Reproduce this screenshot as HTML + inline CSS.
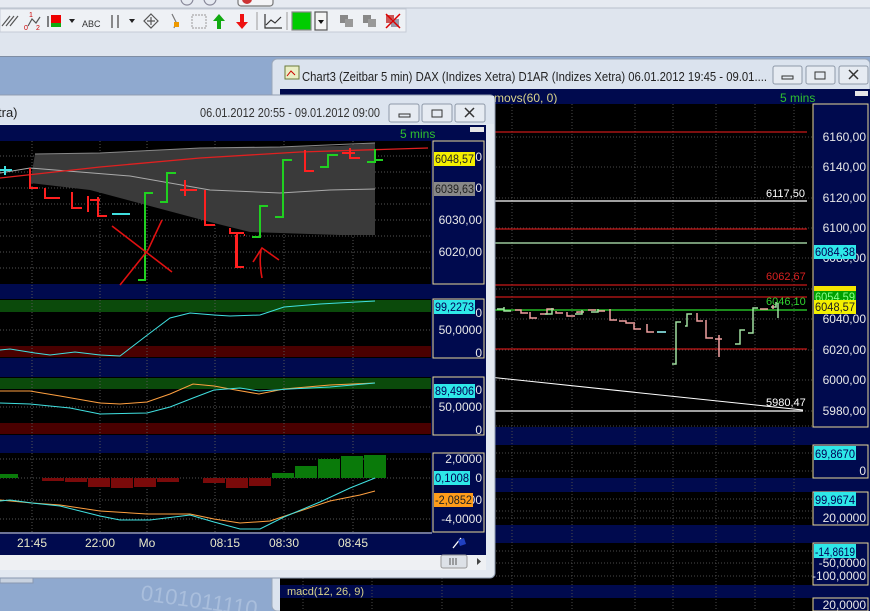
<!DOCTYPE html>
<html><head><meta charset="utf-8">
<style>
html,body{margin:0;padding:0;width:870px;height:611px;overflow:hidden;background:#8fa9cf}
svg{display:block}
text{font-family:"Liberation Sans",sans-serif}
</style></head>
<body>
<svg width="870" height="611" viewBox="0 0 870 611" xmlns="http://www.w3.org/2000/svg">
<rect x="0" y="0" width="870" height="611" fill="#8fa9cf"/>
<text x="140" y="600" font-size="22" fill="#a9bedc" transform="rotate(8 140 600)">0101011110</text>
<rect x="0" y="0" width="870" height="57" fill="#dfe5ee"/>
<rect x="0" y="0" width="870" height="8" fill="#e6eaf1"/>
<line x1="0" y1="8" x2="870" y2="8" stroke="#b8c0cc"/>
<rect x="0" y="9" width="406" height="23" fill="#eef1f5" stroke="#c6ccd6"/>
<line x1="0" y1="56.5" x2="870" y2="56.5" stroke="#7f8da3"/>
<g stroke-width="1.2" fill="none">
<path d="M2 26 L10 16 M6 26 L14 16 M10 26 L18 16" stroke="#555"/>
<path d="M28 26 L32 19 L36 23 L40 17" stroke="#555"/>
<text x="29" y="17" font-size="7" fill="#c00" stroke="none">1</text>
<text x="24" y="30" font-size="7" fill="#c00" stroke="none">0</text><text x="36" y="30" font-size="7" fill="#c00" stroke="none">2</text>
<rect x="51" y="15" width="10" height="8" fill="#e00" stroke="none"/><rect x="51" y="23" width="10" height="4" fill="#1a1" stroke="none"/>
<path d="M48 16 V27" stroke="#333"/>
<path d="M69 19 L75 19 L72 23 Z" fill="#222" stroke="none"/>
<text x="82" y="27" font-size="9" fill="#333" stroke="none">ABC</text>
<path d="M112 15 V28 M118 15 V28" stroke="#444"/>
<path d="M129 19 L135 19 L132 23 Z" fill="#222" stroke="none"/>
<path d="M151 14 L158 21 L151 28 L144 21 Z M151 17 V25 M147 21 H155" stroke="#555"/>
<path d="M172 14 L176 22 L174 28" stroke="#777"/><rect x="174" y="22" width="5" height="5" fill="#e90" stroke="none"/>
<rect x="192" y="15" width="14" height="13" stroke="#aaa" stroke-dasharray="2 1"/>
<path d="M219 14 L225 21 H221 V29 H217 V21 H213 Z" fill="#1a1" stroke="none"/>
<path d="M242 29 L248 22 H244 V14 H240 V22 H236 Z" fill="#e11" stroke="none"/>
<line x1="257" y1="12" x2="257" y2="30" stroke="#aaa"/>
<path d="M265 14 V28 H282 M266 25 L271 20 L275 23 L281 17" stroke="#333"/>
<line x1="287" y1="12" x2="287" y2="30" stroke="#aaa"/>
<rect x="292" y="12" width="19" height="18" fill="#0c0" stroke="#888"/>
<rect x="315" y="12" width="12" height="18" fill="#f4f4f4" stroke="#555"/>
<path d="M318 20 L324 20 L321 24 Z" fill="#111" stroke="none"/>
<rect x="340" y="15" width="8" height="8" fill="#888" stroke="none"/><rect x="345" y="19" width="8" height="8" fill="#999" stroke="none"/>
<rect x="363" y="15" width="8" height="8" fill="#888" stroke="none"/><rect x="368" y="19" width="8" height="8" fill="#999" stroke="none"/>
<rect x="386" y="15" width="8" height="8" fill="#c55" stroke="none"/><rect x="391" y="19" width="8" height="8" fill="#99a" stroke="none"/>
<path d="M386 14 L400 28 M400 14 L386 28" stroke="#d00" stroke-width="1.5"/>
<circle cx="187" cy="-1" r="6" stroke="#889"/><circle cx="210" cy="-1" r="6" stroke="#889"/>
<rect x="238" y="-4" width="35" height="10" rx="3" fill="#f4f4f6" stroke="#777"/>
<circle cx="247" cy="-1" r="5" fill="#c33" stroke="none"/>
</g>

<!-- RIGHT WINDOW -->
<rect x="272" y="59" width="598" height="552" rx="5" fill="#dbe3ee" stroke="#9aa7b9"/>
<rect x="285" y="66" width="14" height="13" fill="#e9eec5" stroke="#6a7a3a"/>
<path d="M287 76 L291 71 L295 75" stroke="#c00" fill="none"/>
<text x="302" y="81" font-size="13" fill="#222" textLength="465" lengthAdjust="spacingAndGlyphs">Chart3 (Zeitbar 5 min)  DAX (Indizes Xetra) D1AR (Indizes Xetra) 06.01.2012 19:45 - 09.01....</text>
<g fill="#e6ebf2" stroke="#8e99a8">
<rect x="773" y="66" width="29" height="18" rx="2"/><rect x="806" y="66" width="29" height="18" rx="2"/><rect x="839" y="66" width="29" height="18" rx="2"/>
</g>
<rect x="782" y="76" width="11" height="3" fill="none" stroke="#333"/>
<rect x="815" y="72" width="10" height="7" fill="none" stroke="#333"/>
<path d="M849 70 L858 79 M858 70 L849 79" stroke="#333" stroke-width="1.5"/>
<rect x="280" y="89" width="590" height="522" fill="#000a4e"/>
<text x="494" y="102" font-size="12" fill="#d9d38a">movs(60, 0)</text>
<text x="780" y="102" font-size="12" fill="#2fc02f">5 mins</text>
<rect x="855" y="91" width="13" height="5" fill="#e6e6e6"/>
<rect x="280" y="104" width="533" height="323" fill="#000"/>
<rect x="280" y="445" width="533" height="33" fill="#000"/>
<rect x="280" y="492" width="533" height="33" fill="#000"/>
<rect x="280" y="543" width="533" height="42" fill="#000"/>
<rect x="280" y="598" width="533" height="13" fill="#000"/>
<g stroke="#4a4a4a" stroke-dasharray="1 2">
<line x1="303" y1="104" x2="303" y2="611"/><line x1="372" y1="104" x2="372" y2="611"/><line x1="442" y1="104" x2="442" y2="611"/>
<line x1="512" y1="104" x2="512" y2="611"/><line x1="572" y1="104" x2="572" y2="611"/><line x1="635" y1="104" x2="635" y2="611"/>
<line x1="673" y1="104" x2="673" y2="611"/><line x1="716" y1="104" x2="716" y2="611"/><line x1="755" y1="104" x2="755" y2="611"/><line x1="794" y1="104" x2="794" y2="611"/>
<line x1="280" y1="137" x2="813" y2="137"/><line x1="280" y1="167" x2="813" y2="167"/><line x1="280" y1="198" x2="813" y2="198"/>
<line x1="280" y1="228" x2="813" y2="228"/><line x1="280" y1="258" x2="813" y2="258"/><line x1="280" y1="289" x2="813" y2="289"/>
<line x1="280" y1="319" x2="813" y2="319"/><line x1="280" y1="350" x2="813" y2="350"/><line x1="280" y1="380" x2="813" y2="380"/>
<line x1="280" y1="411" x2="813" y2="411"/><line x1="280" y1="426" x2="813" y2="426"/>
<line x1="280" y1="453" x2="813" y2="453"/><line x1="280" y1="471" x2="813" y2="471"/>
<line x1="280" y1="499" x2="813" y2="499"/><line x1="280" y1="511" x2="813" y2="511"/><line x1="280" y1="518" x2="813" y2="518"/>
<line x1="280" y1="551" x2="813" y2="551"/><line x1="280" y1="563" x2="813" y2="563"/><line x1="280" y1="576" x2="813" y2="576"/>
</g>
<g stroke-width="1.3">
<line x1="280" y1="132" x2="807" y2="132" stroke="#c81818"/>
<line x1="280" y1="201" x2="807" y2="201" stroke="#fff"/>
<line x1="280" y1="229" x2="807" y2="229" stroke="#c81818"/>
<line x1="280" y1="243" x2="807" y2="243" stroke="#b9f0b9"/>
<line x1="280" y1="285" x2="807" y2="285" stroke="#c81818"/>
<line x1="280" y1="297" x2="807" y2="297" stroke="#c81818"/>
<line x1="280" y1="310" x2="807" y2="310" stroke="#2ee02e"/>
<line x1="280" y1="349" x2="807" y2="349" stroke="#c81818"/>
<line x1="280" y1="411" x2="803" y2="411" stroke="#fff"/>
<line x1="280" y1="355" x2="803" y2="410" stroke="#fff" stroke-width="1"/>
</g>
<text x="766" y="197" font-size="11" fill="#fff">6117,50</text>
<text x="766" y="280" font-size="11" fill="#d82020">6062,67</text>
<text x="766" y="305" font-size="11" fill="#30d030">6046,10</text>
<text x="766" y="406" font-size="11" fill="#fff">5980,47</text>
<g stroke-width="1.5" fill="none">
<path d="M497 309 H504 M504 307 V311 H511" stroke="#9fe09f"/>
<path d="M515 310 H521 V313 H528 M530 312 V318 H537" stroke="#f0a0a0"/>
<path d="M540 314 H547 V309 H554 M556 311 V313 H563 M567 312 V316 H575 M577 313 V312 H584 M588 310 H596 M598 311 H605" stroke="#f0a0a0"/>
<path d="M545 314 H552 V308 M575 314 H582 V310 M591 312 H598 V309" stroke="#9fe09f"/>
<path d="M610 309 V320 H617 M619 321 H626 V323 H633 M634 322 V329 H641 M647 324 V332 H654" stroke="#f0a0a0"/>
<path d="M657 332 H666" stroke="#9ff"/>
<path d="M672 364 H676 V322 H681 M685 326 H687 V314 H692" stroke="#9fe09f"/>
<path d="M697 313 V321 H703 M706 320 V338 H713 M719 335 V357 M715 339 H722" stroke="#f0a0a0"/>
<path d="M735 344 H740 V330 H745 M748 333 H753 V308 H758 M771 307 H776 V302 M778 303 V318" stroke="#9fe09f"/>
<path d="M760 309 H768 M773 305 V309" stroke="#f0a0a0"/>
</g>
<rect x="813" y="104" width="55" height="323" fill="#000a4e" stroke="#e8d898"/>
<rect x="813" y="445" width="55" height="33" fill="#000a4e" stroke="#e8d898"/>
<rect x="813" y="492" width="55" height="33" fill="#000a4e" stroke="#e8d898"/>
<rect x="813" y="543" width="55" height="42" fill="#000a4e" stroke="#e8d898"/>
<rect x="813" y="598" width="55" height="13" fill="#000a4e" stroke="#e8d898"/>
<g font-size="12" fill="#e8e8e8" text-anchor="end">
<text x="866" y="141">6160,00</text><text x="866" y="171">6140,00</text><text x="866" y="202">6120,00</text>
<text x="866" y="232">6100,00</text><text x="866" y="262">6080,00</text><text x="866" y="323">6040,00</text>
<text x="866" y="354">6020,00</text><text x="866" y="384">6000,00</text><text x="866" y="415">5980,00</text>
<text x="866" y="475">0</text><text x="866" y="522">20,0000</text><text x="866" y="567">-50,0000</text>
<text x="866" y="580">-100,0000</text><text x="866" y="609">20,0000</text>
</g>
<rect x="814" y="245" width="42" height="14" fill="#2ee8e8"/><text x="815" y="256" font-size="12" fill="#005" textLength="40" lengthAdjust="spacingAndGlyphs">6084,38</text>
<rect x="814" y="286" width="42" height="14" fill="#f4e400"/>
<rect x="814" y="291" width="42" height="12" fill="#00a000"/><text x="815" y="301" font-size="12" fill="#8f8" textLength="40" lengthAdjust="spacingAndGlyphs">6054,59</text>
<rect x="814" y="300" width="42" height="14" fill="#f4f000"/><text x="815" y="311" font-size="12" fill="#222" textLength="40" lengthAdjust="spacingAndGlyphs">6048,57</text>
<rect x="814" y="446" width="42" height="14" fill="#2ee8e8"/><text x="815" y="458" font-size="12" fill="#005" textLength="40" lengthAdjust="spacingAndGlyphs">69,8670</text>
<rect x="814" y="492" width="42" height="14" fill="#2ee8e8"/><text x="815" y="504" font-size="12" fill="#005" textLength="40" lengthAdjust="spacingAndGlyphs">99,9674</text>
<rect x="814" y="544" width="42" height="14" fill="#2ee8e8"/><text x="815" y="556" font-size="12" fill="#005" textLength="40" lengthAdjust="spacingAndGlyphs">-14,8619</text>
<text x="287" y="595" font-size="11" fill="#d9d38a">macd(12, 26, 9)</text>

<!-- LEFT WINDOW -->
<rect x="-5" y="95" width="500" height="483" rx="5" fill="#e3e9f1" stroke="#8f9cb0"/>
<rect x="-5" y="96" width="499" height="28" fill="#dce4ef"/>
<text x="-2" y="117" font-size="13" fill="#222">tra)</text>
<text x="200" y="117" font-size="13" fill="#333" textLength="180" lengthAdjust="spacingAndGlyphs">06.01.2012 20:55 - 09.01.2012 09:00</text>
<g fill="#e6ebf2" stroke="#8e99a8">
<rect x="389" y="104" width="30" height="18" rx="2"/><rect x="422" y="104" width="30" height="18" rx="2"/><rect x="455" y="104" width="30" height="18" rx="2"/>
</g>
<rect x="399" y="114" width="11" height="3" fill="none" stroke="#333"/>
<rect x="432" y="110" width="10" height="7" fill="none" stroke="#333"/>
<path d="M465 108 L474 117 M474 108 L465 117" stroke="#333" stroke-width="1.5"/>
<rect x="0" y="125" width="486" height="430" fill="#000a4e"/>
<text x="400" y="138" font-size="12" fill="#2fc02f">5 mins</text>
<rect x="470" y="127" width="14" height="5" fill="#e6e6e6"/>
<rect x="0" y="141" width="431" height="143" fill="#000"/>
<rect x="0" y="299" width="431" height="59" fill="#000"/>
<rect x="0" y="377" width="431" height="58" fill="#000"/>
<rect x="0" y="453" width="431" height="79" fill="#000"/>
<rect x="0" y="300" width="431" height="12" fill="#0b4a0b"/>
<rect x="0" y="346" width="431" height="11" fill="#4a0000"/>
<rect x="0" y="378" width="431" height="11" fill="#0b4a0b"/>
<rect x="0" y="423" width="431" height="11" fill="#4a0000"/>
<g stroke="#555" stroke-dasharray="1 2">
<line x1="32" y1="141" x2="32" y2="532"/><line x1="100" y1="141" x2="100" y2="532"/><line x1="147" y1="141" x2="147" y2="532"/>
<line x1="215" y1="141" x2="215" y2="532"/><line x1="284" y1="141" x2="284" y2="532"/><line x1="353" y1="141" x2="353" y2="532"/>
<line x1="0" y1="156" x2="431" y2="156"/><line x1="0" y1="172" x2="431" y2="172"/><line x1="0" y1="188" x2="431" y2="188"/>
<line x1="0" y1="204" x2="431" y2="204"/><line x1="0" y1="220" x2="431" y2="220"/><line x1="0" y1="236" x2="431" y2="236"/>
<line x1="0" y1="252" x2="431" y2="252"/><line x1="0" y1="268" x2="431" y2="268"/>
<line x1="0" y1="330" x2="431" y2="330"/><line x1="0" y1="407" x2="431" y2="407"/>
<line x1="0" y1="459" x2="431" y2="459"/><line x1="0" y1="478" x2="431" y2="478"/><line x1="0" y1="500" x2="431" y2="500"/><line x1="0" y1="519" x2="431" y2="519"/>
</g>
<polygon points="35,154 100,153 200,148 280,147 340,146 375,143 375,235 340,235 250,232 210,222 150,206 90,190 30,183" fill="#3a3a3a"/>
<polyline points="0,173 30,168 80,172 130,176 210,190 280,193 330,190 375,189" fill="none" stroke="#aaa"/>
<polyline points="35,154 100,153 200,148 280,147 375,143" fill="none" stroke="#888"/>
<polyline points="0,178 100,167 200,158 300,152 428,148" fill="none" stroke="#e02020" stroke-width="1.3"/>
<g stroke-width="2" fill="none">
<path d="M0 170 H12 M5 166 V175 M112 214 H130" stroke="#40e0e0"/>
<path d="M30 168 V188 H38 M45 188 V198 H60 M72 192 V208 H82 M88 196 V212 M90 200 H100 M98 197 V216 H107" stroke="#ff2020"/>
<path d="M185 180 V196 M180 190 H197 M205 190 V225 H215 M230 228 V233 H244 M237 232 V268 M245 235 H244" stroke="#ff2020"/>
<path d="M236 235 V267 H244 M305 150 V171 H314 M328 165 V160" stroke="#ff2020"/>
<path d="M350 148 V158 H360 M342 153 H355" stroke="#ff2020"/>
<path d="M138 280 H145 V193 H153 M160 202 H167 V173 H176 M252 237 H260 V206 H268 M275 217 H283 V160 H292 M320 167 H328 V155 H338 M367 162 H375 V149 M375 160 H383" stroke="#20d020"/>
</g>
<path d="M112 226 L172 272 M162 220 L148 250 L120 285" stroke="#e01010" stroke-width="1.6" fill="none"/>
<path d="M262 278 Q259 262 261 250 M253 262 L262 248 L279 260" stroke="#e01010" stroke-width="1.6" fill="none"/>
<polyline points="0,350 10,349 35,353 50,355 75,352 100,355 120,356 150,333 170,318 190,313 214,315 230,316 260,315 284,307 320,304 375,301" fill="none" stroke="#40e0e0"/>
<polyline points="0,391 30,391 60,396 100,403 120,404 147,402 170,394 193,384 214,386 230,389 259,394 284,389 330,385 375,383" fill="none" stroke="#ffa040"/>
<polyline points="0,403 30,404 70,408 100,414 147,413 170,407 193,398 214,390 240,388 259,391 290,389 330,387 375,383" fill="none" stroke="#40e0e0"/>
<g fill="#0a7a0a"><rect x="0" y="474" width="18" height="4"/><rect x="272" y="473" width="22" height="5"/><rect x="295" y="466" width="22" height="12"/><rect x="318" y="459" width="22" height="19"/><rect x="341" y="456" width="22" height="22"/><rect x="364" y="455" width="22" height="23"/></g>
<g fill="#7a0a0a"><rect x="42" y="478" width="22" height="3"/><rect x="65" y="478" width="22" height="4"/><rect x="88" y="478" width="22" height="9"/><rect x="111" y="478" width="22" height="10"/><rect x="134" y="478" width="22" height="9"/><rect x="157" y="478" width="22" height="4"/><rect x="203" y="478" width="22" height="5"/><rect x="226" y="478" width="22" height="10"/><rect x="249" y="478" width="22" height="8"/></g>
<polyline points="0,500 32,503 60,505 100,511 147,514 190,514 214,519 240,523 270,521 300,511 330,501 360,495 375,491" fill="none" stroke="#ffa040"/>
<polyline points="0,501 10,500 32,503 60,506 100,516 120,520 150,520 190,515 214,522 240,529 260,529 284,517 320,502 350,488 375,478" fill="none" stroke="#40e0e0"/>
<rect x="433" y="141" width="51" height="143" fill="#000a4e" stroke="#e8d898"/>
<rect x="433" y="299" width="51" height="59" fill="#000a4e" stroke="#e8d898"/>
<rect x="433" y="377" width="51" height="58" fill="#000a4e" stroke="#e8d898"/>
<rect x="433" y="453" width="51" height="79" fill="#000a4e" stroke="#e8d898"/>
<g font-size="12" fill="#e8e8e8" text-anchor="end">
<text x="482" y="161">6050,00</text><text x="482" y="192">6040,00</text>
<text x="482" y="224">6030,00</text><text x="482" y="256">6020,00</text>
<text x="482" y="317">0</text><text x="482" y="334">50,0000</text><text x="482" y="357">0</text>
<text x="482" y="394">0</text><text x="482" y="411">50,0000</text><text x="482" y="434">0</text>
<text x="482" y="463">2,0000</text><text x="482" y="482">0</text><text x="482" y="504">00</text><text x="482" y="523">-4,0000</text>
</g>
<rect x="434" y="152" width="41" height="14" fill="#f4f000"/><text x="435" y="163" font-size="12" fill="#222" textLength="39" lengthAdjust="spacingAndGlyphs">6048,57</text>
<rect x="434" y="182" width="41" height="14" fill="#888"/><text x="435" y="193" font-size="12" fill="#222" textLength="39" lengthAdjust="spacingAndGlyphs">6039,63</text>
<rect x="434" y="300" width="41" height="14" fill="#2ee8e8"/><text x="435" y="311" font-size="12" fill="#005" textLength="39" lengthAdjust="spacingAndGlyphs">99,2273</text>
<rect x="434" y="384" width="41" height="14" fill="#2ee8e8"/><text x="435" y="395" font-size="12" fill="#005" textLength="39" lengthAdjust="spacingAndGlyphs">89,4906</text>
<rect x="434" y="471" width="36" height="14" fill="#2ee8e8"/><text x="435" y="482" font-size="12" fill="#005" textLength="34" lengthAdjust="spacingAndGlyphs">0,1008</text>
<rect x="434" y="493" width="39" height="14" fill="#ff9c1a"/><text x="435" y="504" font-size="12" fill="#222" textLength="37" lengthAdjust="spacingAndGlyphs">-2,0852</text>
<line x1="0" y1="533" x2="432" y2="533" stroke="#ddd"/>
<g font-size="12" fill="#e8e8c8" text-anchor="middle">
<text x="32" y="547">21:45</text><text x="100" y="547">22:00</text><text x="147" y="547">Mo</text>
<text x="225" y="547">08:15</text><text x="284" y="547">08:30</text><text x="353" y="547">08:45</text>
</g>
<rect x="433" y="533" width="52" height="20" fill="#000a4e"/>
<path d="M453 548 L461 538" stroke="#fff" stroke-width="1.3"/><path d="M458 540 L464 538 L466 544 L460 546 Z" fill="#2040c0"/>
<rect x="0" y="555" width="486" height="15" fill="#eef0f3"/>
<rect x="441" y="555" width="26" height="13" rx="2" fill="#dde1e7" stroke="#999"/>
<path d="M450 558 V565 M453 558 V565 M456 558 V565" stroke="#555"/>
<path d="M477 558 L481 561.5 L477 565 Z" fill="#444"/>
<rect x="0" y="578" width="33" height="5" fill="#c8d2e0" stroke="#8898b0"/>
</svg>
</body></html>
